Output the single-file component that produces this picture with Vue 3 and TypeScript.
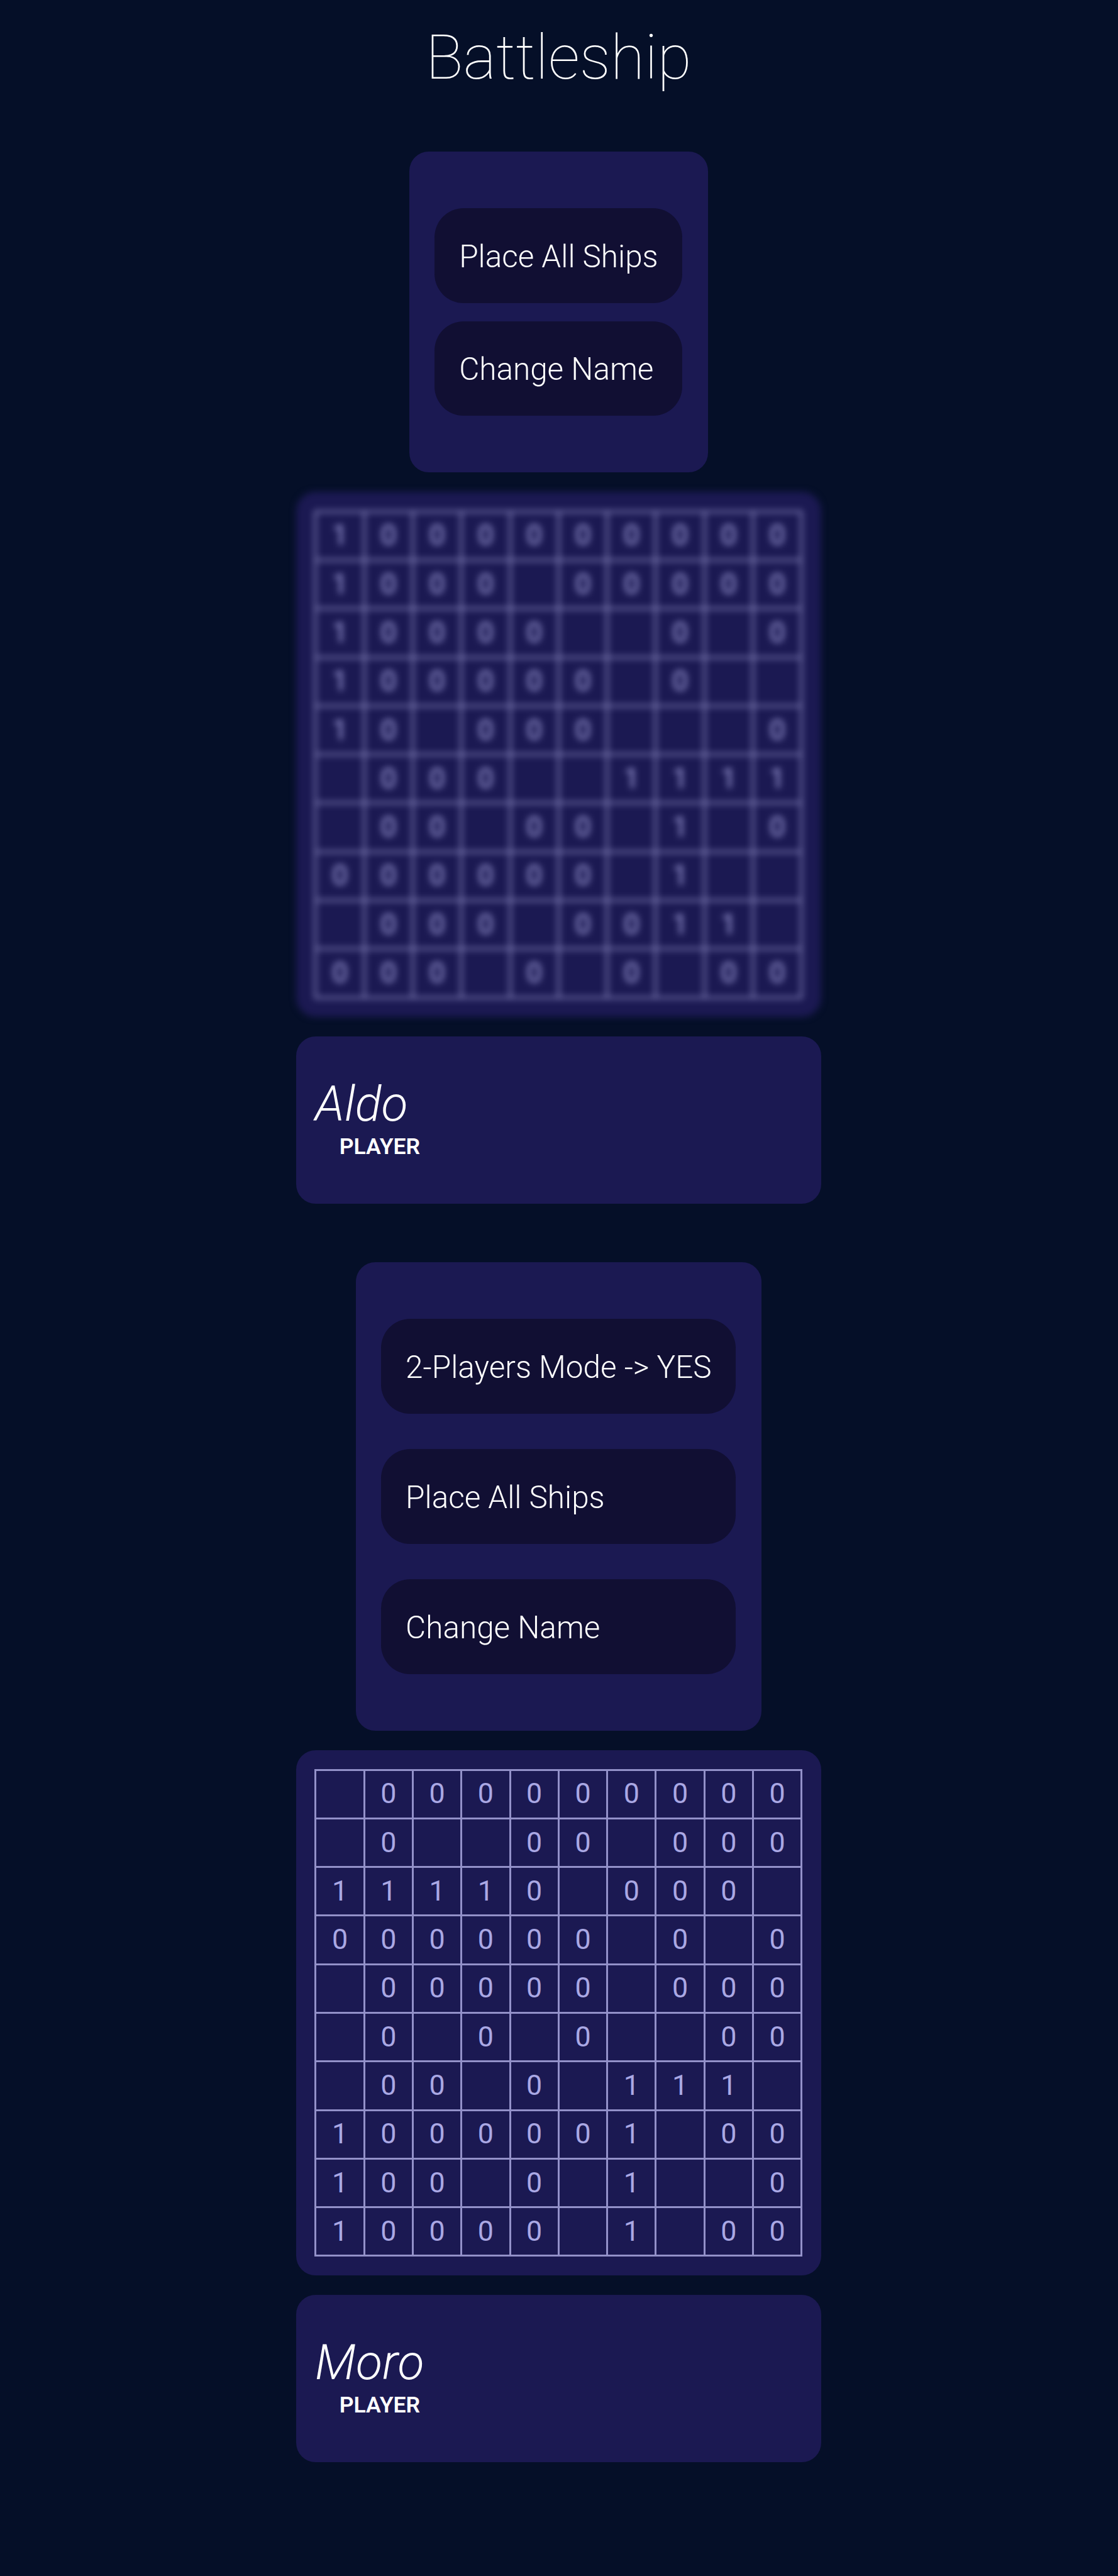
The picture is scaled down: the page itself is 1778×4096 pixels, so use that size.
<script setup lang="ts">
interface Player {
  name: string
  actions: string[]
  hidden: boolean
  board: string[]
}

// Each board row is a string of cells: "1" ship, "0" blocked, "." empty.
const players: Player[] = [
  {
    name: 'Aldo',
    actions: ['Place All Ships', 'Change Name'],
    hidden: true,
    board: [
      '1000000000',
      '1000.00000',
      '10000..0.0',
      '100000.0..',
      '10.000...0',
      '.000..1111',
      '.00.00.1.0',
      '000000.1..',
      '.000.0011.',
      '000.0.0.00',
    ],
  },
  {
    name: 'Moro',
    actions: ['2-Players Mode -> YES', 'Place All Ships', 'Change Name'],
    hidden: false,
    board: [
      '.000000000',
      '.0..00.000',
      '11110.000.',
      '000000.0.0',
      '.00000.000',
      '.0.0.0..00',
      '.00.0.111.',
      '1000001.00',
      '100.0.1..0',
      '10000.1.00',
    ],
  },
]

const cellText = (cell: string): string => (cell === '.' ? '' : cell)
</script>

<template>
  <main class="page">
    <h1 class="title">Battleship</h1>
    <section v-for="player in players" :key="player.name" class="side">
      <div class="menu" :class="{ roomy: player.actions.length > 2 }">
        <button v-for="action in player.actions" :key="action" type="button" class="action">
          {{ action }}
        </button>
      </div>
      <div class="board" :class="{ hidden: player.hidden }">
        <div class="grid">
          <template v-for="(row, r) in player.board" :key="r">
            <span v-for="(cell, c) in row.split('')" :key="c" class="cell">{{ cellText(cell) }}</span>
          </template>
        </div>
      </div>
      <div class="card">
        <div class="name">{{ player.name }}</div>
        <div class="role">PLAYER</div>
      </div>
    </section>
  </main>
</template>

<style>
html {
  font-size: calc(100vw / 230);
  background: #050f28;
}
</style>

<style scoped>
.page {
  display: flex;
  flex-direction: column;
  align-items: center;
  box-sizing: border-box;
  width: 229.85rem;
  min-height: 529.8rem;
  background: #050f28;
  font-family: Roboto, "Liberation Sans", sans-serif;
  color: #fff;
}
.title {
  box-sizing: border-box;
  margin: 0;
  padding-top: 4.15rem;
  height: 31.2rem;
  font-size: 12.8rem;
  line-height: 15.4rem;
  font-weight: 100;
}
.side {
  display: flex;
  flex-direction: column;
  align-items: center;
  gap: 4rem;
  margin-bottom: 12rem;
}
.menu {
  display: flex;
  flex-direction: column;
  gap: 3.7rem;
  padding: 11.65rem 5.3rem;
  border-radius: 4rem;
  background: #1b1952;
}
.menu.roomy {
  gap: 7.3rem;
}
.action {
  height: 19.5rem;
  padding: 0.3rem 5rem 0;
  border: 0;
  border-radius: 6rem;
  background: #110f33;
  color: inherit;
  font-family: inherit;
  font-size: 6.4rem;
  font-weight: 300;
  line-height: 9.6rem;
  text-align: left;
  white-space: nowrap;
}
.board {
  box-sizing: border-box;
  width: 108rem;
  height: 108rem;
  padding: 3.8rem;
  border-radius: 4rem;
  background: #1b1952;
}
.board.hidden {
  filter: blur(0.7rem);
}
.grid {
  display: grid;
  grid-template-columns: repeat(10, 10rem);
  grid-auto-rows: 10rem;
  border-top: 0.4rem solid #9391c9;
  border-left: 0.4rem solid #9391c9;
}
.cell {
  display: flex;
  align-items: center;
  justify-content: center;
  border-right: 0.4rem solid #9391c9;
  border-bottom: 0.4rem solid #9391c9;
  color: #aaa8e4;
  font-size: 5.8rem;
  line-height: 1;
}
.card {
  box-sizing: border-box;
  width: 108rem;
  height: 34.45rem;
  padding: 8rem 3.9rem 0;
  border-radius: 4rem;
  background: #1b1952;
}
.name {
  font-size: 10rem;
  line-height: 12rem;
  font-style: italic;
  font-weight: 300;
}
.role {
  padding-left: 5rem;
  font-size: 4.6rem;
  line-height: 5.4rem;
  font-weight: 600;
}
</style>
